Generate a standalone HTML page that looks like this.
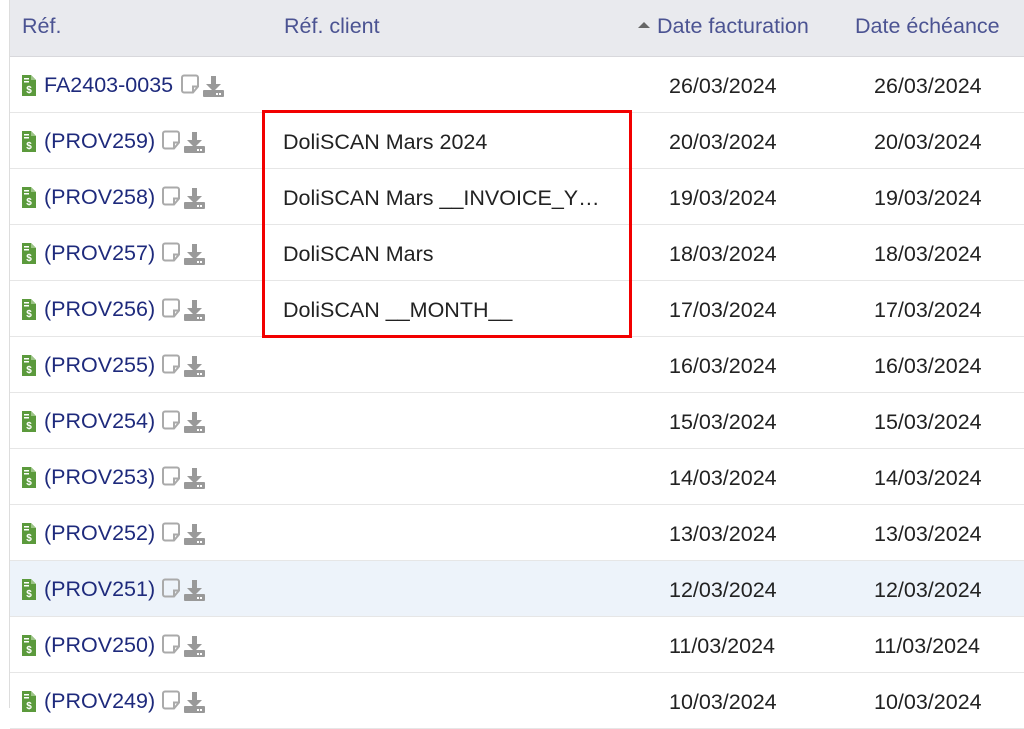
<!DOCTYPE html>
<html><head><meta charset="utf-8"><style>
body{margin:0;width:1024px;height:708px;overflow:hidden;background:#fff;font-family:"Liberation Sans",Arial,sans-serif;position:relative}
.lb{position:absolute;left:9px;top:0;width:1px;height:708px;background:#ddd}
.hd{position:absolute;left:10px;top:0;width:1014px;height:56px;background:#e9eaee;border-bottom:1px solid #d8d8dc}
.hd span{position:absolute;top:14px;font-size:21.5px;color:#4b5392}
.row{position:absolute;left:10px;width:1014px;height:55px;border-bottom:1px solid #e6e6e6;background:#fff}
.row.hl{background:#edf3fa}
.row span{position:absolute;font-size:21.5px;color:#222}
.ref{color:#1e2a7c!important}
.ic{position:absolute;top:16px}
.box{position:absolute;left:262px;top:110px;width:364px;height:222px;border:3px solid #f20000}
</style></head><body>
<div class="lb"></div>
<div class="hd">
<span style="left:12px">Réf.</span>
<span style="left:274px">Réf. client</span>
<svg style="position:absolute;left:628px;top:21px" width="12" height="8"><polygon points="0,7 6,1 12,7" fill="#666"/></svg>
<span style="left:647px">Date facturation</span>
<span style="left:845px">Date échéance</span>
</div>
<div id="rows"></div>
<div class="box"></div>
<script>
var data=[["FA2403-0035","","26"],["(PROV259)","DoliSCAN Mars 2024","20"],["(PROV258)","DoliSCAN Mars __INVOICE_Y…","19"],["(PROV257)","DoliSCAN Mars","18"],["(PROV256)","DoliSCAN __MONTH__","17"],["(PROV255)","","16"],["(PROV254)","","15"],["(PROV253)","","14"],["(PROV252)","","13"],["(PROV251)","","12"],["(PROV250)","","11"],["(PROV249)","","10"]];
var h="";
var file='<svg class="ic" style="left:12px;top:17px" width="14" height="22" viewBox="0 0 14 22"><path d="M0 1h9l5 5v16H0z" fill="#5b9a3c"/><path d="M9 1v5h5" fill="#9cc487"/><rect x="2" y="4" width="5" height="1.5" fill="#fff"/><rect x="2" y="7" width="5" height="1.5" fill="#fff"/><text x="7" y="19" font-size="10" font-weight="bold" fill="#fff" text-anchor="middle" font-family="Liberation Sans">$</text></svg>';
data.forEach(function(d,i){
var top=57+56*i;
var nx=d[0]=="FA2403-0035"?171:152;
h+='<div class="row'+(i==9?' hl':'')+'" style="top:'+top+'px">'+file+
'<span class="ref" style="left:34px;top:16px">'+d[0]+'</span>'+
'<svg class="ic" style="left:'+nx+'px;top:17px" width="20" height="21" viewBox="0 0 20 21"><path d="M3 1.5h12a2 2 0 0 1 2 2v9l-5 6H3a2 2 0 0 1-2-2V3.5a2 2 0 0 1 2-2z" fill="none" stroke="#aaa" stroke-width="2"/><path d="M17 12.5h-5v6" fill="none" stroke="#aaa" stroke-width="2"/></svg>'+
'<svg class="ic" style="left:'+(nx+21)+'px;top:19px" width="23" height="21" viewBox="0 0 23 21"><path d="M9 0h5v8h5l-7.5 7.5L4 8h5z" fill="#999"/><rect x="1" y="14" width="21" height="7" rx="1" fill="#999"/><rect x="14" y="17" width="2" height="2" fill="#fff"/><rect x="17" y="17" width="2" height="2" fill="#fff"/></svg>'+
(d[1]?'<span style="left:273px;top:17px">'+d[1]+'</span>':'')+
'<span style="left:659px;top:17px">'+d[2]+'/03/2024</span>'+
'<span style="left:864px;top:17px">'+d[2]+'/03/2024</span></div>';
});
document.getElementById("rows").innerHTML=h;
</script>
</body></html>
